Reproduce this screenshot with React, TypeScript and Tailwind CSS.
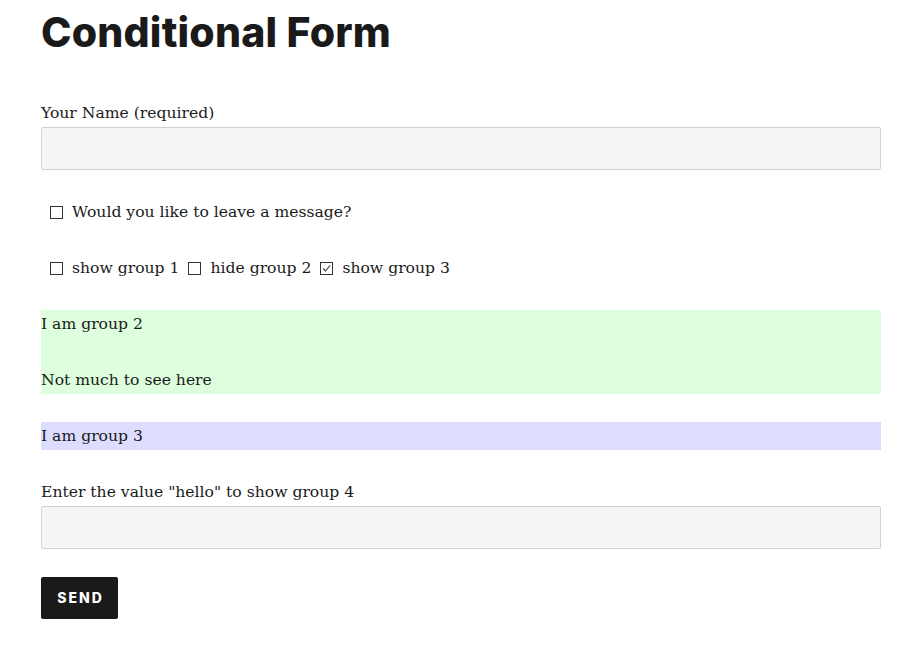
import React from 'react';

const Box: React.FC<{ checked?: boolean }> = ({ checked }) => (
  <span className="inline-flex w-[13px] h-[13px] border border-[#333] bg-white items-center justify-center shrink-0">
    {checked && (
      <svg width="9" height="9" viewBox="0 0 9 9" fill="none">
        <path d="M1 4.5 L3.5 7 L8 1.5" stroke="#333" strokeWidth="1.1" />
      </svg>
    )}
  </span>
);

const Check: React.FC<{ label: string; checked?: boolean }> = ({ label, checked }) => (
  <label className="inline-flex items-center">
    <span className="mx-[9px] flex items-center"><Box checked={checked} /></span>
    <span>{label}</span>
  </label>
);

export default function App() {
  return (
    <div className="min-h-[648px] bg-white text-[#1a1a1a]" style={{ fontFamily: '"DejaVu Serif", serif' }}>
      <div className="w-[840px] ml-[41px] text-[15.6px] leading-[28px]">
        <h1 className="pt-[7px] h-[71px] text-[41px] leading-[50px] font-extrabold tracking-[0.2px]" style={{ fontFamily: 'Inter, sans-serif' }}>
          Conditional Form
        </h1>
        <p className="mt-[28px]">Your Name (required)</p>
        <input className="block w-full h-[43px] bg-[#f5f5f5] border border-[#d1d1d1] rounded-[2px]" />
        <div className="mt-[28px] h-[28px] flex items-center">
          <Check label="Would you like to leave a message?" />
        </div>
        <div className="mt-[28px] h-[28px] flex items-center">
          <Check label="show group 1" />
          <Check label="hide group 2" />
          <Check label="show group 3" checked />
        </div>
        <div className="mt-[28px] bg-[#ddffdd]">
          <p className="mb-[28px]">I am group 2</p>
          <p>Not much to see here</p>
        </div>
        <div className="mt-[28px] bg-[#ddddff]">
          <p>I am group 3</p>
        </div>
        <p className="mt-[28px]">Enter the value "hello" to show group 4</p>
        <input className="block w-full h-[43px] bg-[#f5f5f5] border border-[#d1d1d1] rounded-[2px]" />
        <button
          className="block mt-[28px] w-[77px] h-[42px] bg-[#1a1a1a] text-white rounded-[2px] text-[14px] font-extrabold tracking-[2px] pl-[2px]"
          style={{ fontFamily: 'Inter, sans-serif' }}
        >
          SEND
        </button>
      </div>
    </div>
  );
}
